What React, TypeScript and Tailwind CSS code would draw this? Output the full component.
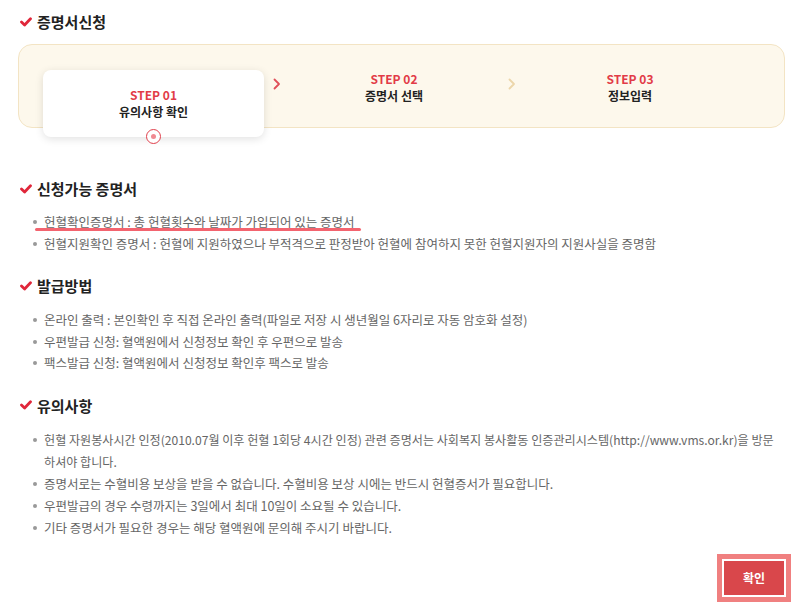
import React from "react";

const font = { fontFamily: '"Noto Sans CJK KR", "Noto Sans", sans-serif' };

function Check() {
  return (
    <svg width="12" height="10" viewBox="0 0 12 10" className="shrink-0">
      <path d="M1.5 5 L4.6 8 L10.5 1.8" fill="none" stroke="#e0263a" strokeWidth="2.8" strokeLinecap="round" strokeLinejoin="round" />
    </svg>
  );
}

function Heading({ children }: { children: React.ReactNode }) {
  return (
    <h2 className="flex items-center gap-[5px] pl-[20px] text-[15px] font-bold leading-none text-[#222]">
      <Check />
      <span>{children}</span>
    </h2>
  );
}

function Bullet({
  children,
  underline,
  small,
  tall,
}: {
  children: React.ReactNode;
  underline?: boolean;
  small?: boolean;
  tall?: boolean;
}) {
  return (
    <li
      className={`relative flex text-[#666] ${small ? "text-[12.1px]" : "text-[12.5px]"} ${
        tall ? "leading-[22px]" : "leading-[21.5px]"
      }`}
    >
      <span className="w-[13px] shrink-0 pl-[33px] box-content">
        <span className="mt-[9px] block h-[4px] w-[4px] rounded-full bg-[#999]" />
      </span>
      <span className="-ml-[2px] whitespace-nowrap">{children}</span>
      {underline && (
        <span className="absolute left-[35px] top-[17px] h-[3px] w-[326px] rounded-full bg-[#f3646f]" />
      )}
    </li>
  );
}

function Arrow({ color }: { color: string }) {
  return (
    <svg width="8" height="12" viewBox="0 0 8 12">
      <path d="M1.5 1.5 L6 6 L1.5 10.5" fill="none" stroke={color} strokeWidth="1.8" strokeLinecap="round" strokeLinejoin="round" />
    </svg>
  );
}

function StepText({ step, label }: { step: string; label: string }) {
  return (
    <>
      <span className="text-[12px] font-bold leading-[17px] text-[#e23b47]">{step}</span>
      <span className="text-[12px] font-bold leading-[17px] text-[#222]">{label}</span>
    </>
  );
}

export default function App() {
  return (
    <div className="h-[610px] w-[800px] overflow-hidden bg-white pt-[14px]" style={font}>
      <Heading>증명서신청</Heading>

      {/* 단계 */}
      <div className="ml-[18px] mr-[15px] mt-[15px] flex h-[84px] items-start rounded-[14px] border border-[#f3e4c4] bg-[#fdf8ec] pl-[24px] pt-[25px]">
        <div className="relative flex h-[67px] w-[221px] shrink-0 flex-col items-center rounded-[8px] bg-white pt-[16px] shadow-[0_2px_8px_rgba(0,0,0,0.12)]">
          <StepText step="STEP 01" label="유의사항 확인" />
          <span className="absolute -bottom-[7px] flex h-[15px] w-[15px] items-center justify-center rounded-full border-[1.5px] border-[#e0404c] bg-white">
            <span className="h-[5px] w-[5px] rounded-full bg-[#f08a92]" />
          </span>
        </div>
        <div className="ml-[9px] mt-[8px] w-[20px]">
          <Arrow color="#e0505a" />
        </div>
        <div className="-ml-[1px] flex w-[204px] flex-col items-center">
          <StepText step="STEP 02" label="증명서 선택" />
        </div>
        <div className="ml-[12px] mt-[8px] w-[8px]">
          <Arrow color="#ecd6aa" />
        </div>
        <div className="flex w-[228px] flex-col items-center">
          <StepText step="STEP 03" label="정보입력" />
        </div>
      </div>

      <div className="mt-[53px]">
        <Heading>신청가능 증명서</Heading>
        <ul className="mt-[15px]">
          <Bullet underline>헌혈확인증명서 : 총 헌혈횟수와 날짜가 가입되어 있는 증명서</Bullet>
          <Bullet>헌혈지원확인 증명서 : 헌혈에 지원하였으나 부적격으로 판정받아 헌혈에 참여하지 못한 헌혈지원자의 지원사실을 증명함</Bullet>
        </ul>
      </div>

      <div className="mt-[24px]">
        <Heading>발급방법</Heading>
        <ul className="mt-[16px]">
          <Bullet>온라인 출력 : 본인확인 후 직접 온라인 출력(파일로 저장 시 생년월일 6자리로 자동 암호화 설정)</Bullet>
          <Bullet>우편발급 신청: 혈액원에서 신청정보 확인 후 우편으로 발송</Bullet>
          <Bullet>팩스발급 신청: 혈액원에서 신청정보 확인후 팩스로 발송</Bullet>
        </ul>
      </div>

      <div className="mt-[24px]">
        <Heading>유의사항</Heading>
        <ul className="mt-[16px]">
          <Bullet small tall>
            헌혈 자원봉사시간 인정(2010.07월 이후 헌혈 1회당 4시간 인정) 관련 증명서는 사회복지 봉사활동 인증관리시스템(http://www.vms.or.kr)을 방문
            <br />
            하셔야 합니다.
          </Bullet>
          <Bullet tall>증명서로는 수혈비용 보상을 받을 수 없습니다. 수혈비용 보상 시에는 반드시 헌혈증서가 필요합니다.</Bullet>
          <Bullet tall>우편발급의 경우 수령까지는 3일에서 최대 10일이 소요될 수 있습니다.</Bullet>
          <Bullet tall>기타 증명서가 필요한 경우는 해당 혈액원에 문의해 주시기 바랍니다.</Bullet>
        </ul>
      </div>

      <div className="mt-[15px] flex justify-end pr-[9px]">
        <button className="h-[48px] w-[74px] bg-[#f08080] p-[5px]">
          <span className="flex h-full w-full items-center justify-center border-2 border-white bg-[#d9474b] text-[12px] font-bold text-white">
            확인
          </span>
        </button>
      </div>
    </div>
  );
}
